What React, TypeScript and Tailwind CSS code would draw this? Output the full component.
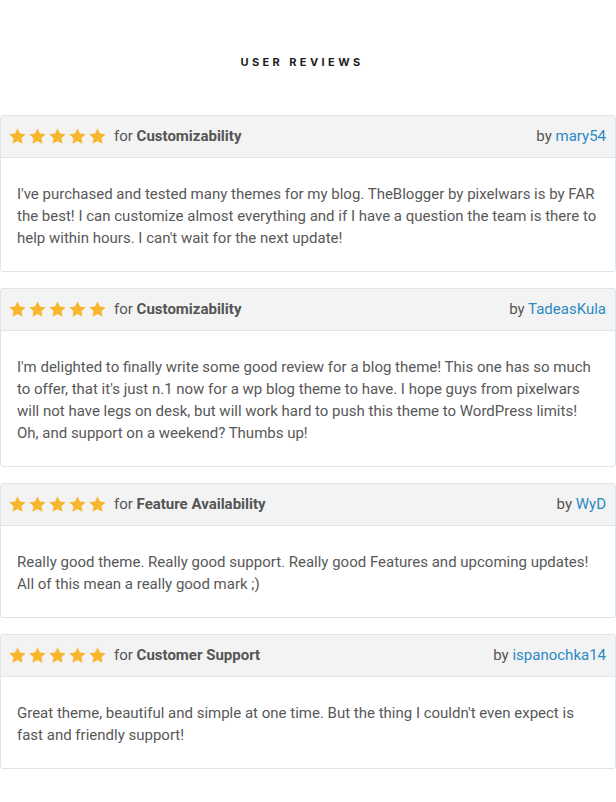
import React from "react";

const reviews = [
  {
    topic: "Customizability",
    author: "mary54",
    text: "I've purchased and tested many themes for my blog. TheBlogger by pixelwars is by FAR the best! I can customize almost everything and if I have a question the team is there to help within hours. I can't wait for the next update!",
  },
  {
    topic: "Customizability",
    author: "TadeasKula",
    text: "I'm delighted to finally write some good review for a blog theme! This one has so much to offer, that it's just n.1 now for a wp blog theme to have. I hope guys from pixelwars will not have legs on desk, but will work hard to push this theme to WordPress limits! Oh, and support on a weekend? Thumbs up!",
  },
  {
    topic: "Feature Availability",
    author: "WyD",
    text: "Really good theme. Really good support. Really good Features and upcoming updates! All of this mean a really good mark ;)",
  },
  {
    topic: "Customer Support",
    author: "ispanochka14",
    text: "Great theme, beautiful and simple at one time. But the thing I couldn't even expect is fast and friendly support!",
  },
];

function Star() {
  return (
    <svg viewBox="0 0 24 24" className="w-[19px] h-[19px]" fill="#f7b62c">
      <path d="M12 1.8l3.1 6.5 7.1.9-5.2 4.9 1.3 7.1L12 17.8l-6.3 3.4 1.3-7.1-5.2-4.9 7.1-.9z" />
    </svg>
  );
}

export default function App() {
  return (
    <div
      className="w-[616px] bg-white pb-8"
      style={{ fontFamily: "Roboto, 'Liberation Sans', sans-serif" }}
    >
      <h2
        className="pt-[57px] text-center text-[11px] leading-[11px] font-bold tracking-[3.4px] text-[#1c1c1c] pr-[12px]"
        style={{ fontFamily: "Inter, 'Liberation Sans', sans-serif" }}
      >
        USER REVIEWS
      </h2>
      <div className="mt-[47px] flex flex-col gap-[16px]">
        {reviews.map((r, i) => (
          <div key={i} className="border border-[#dde4ea] rounded-[3px] overflow-hidden">
            <div className="h-[42px] bg-[#f3f3f3] border-b border-[#dde4ea] flex items-center justify-between pl-[7px] pr-[9px] text-[15px] text-[#555]">
              <div className="flex items-center">
                <div className="flex gap-[1px] mr-[7px]">
                  <Star />
                  <Star />
                  <Star />
                  <Star />
                  <Star />
                </div>
                <span>
                  for <b className="font-bold text-[#555]">{r.topic}</b>
                </span>
              </div>
              <div>
                by <span className="text-[#2b8ac4]">{r.author}</span>
              </div>
            </div>
            <p className="pl-[16px] pr-[14px] pt-[25px] pb-[22px] text-[15px] leading-[22px] text-[#585858]">{r.text}</p>
          </div>
        ))}
      </div>
    </div>
  );
}
